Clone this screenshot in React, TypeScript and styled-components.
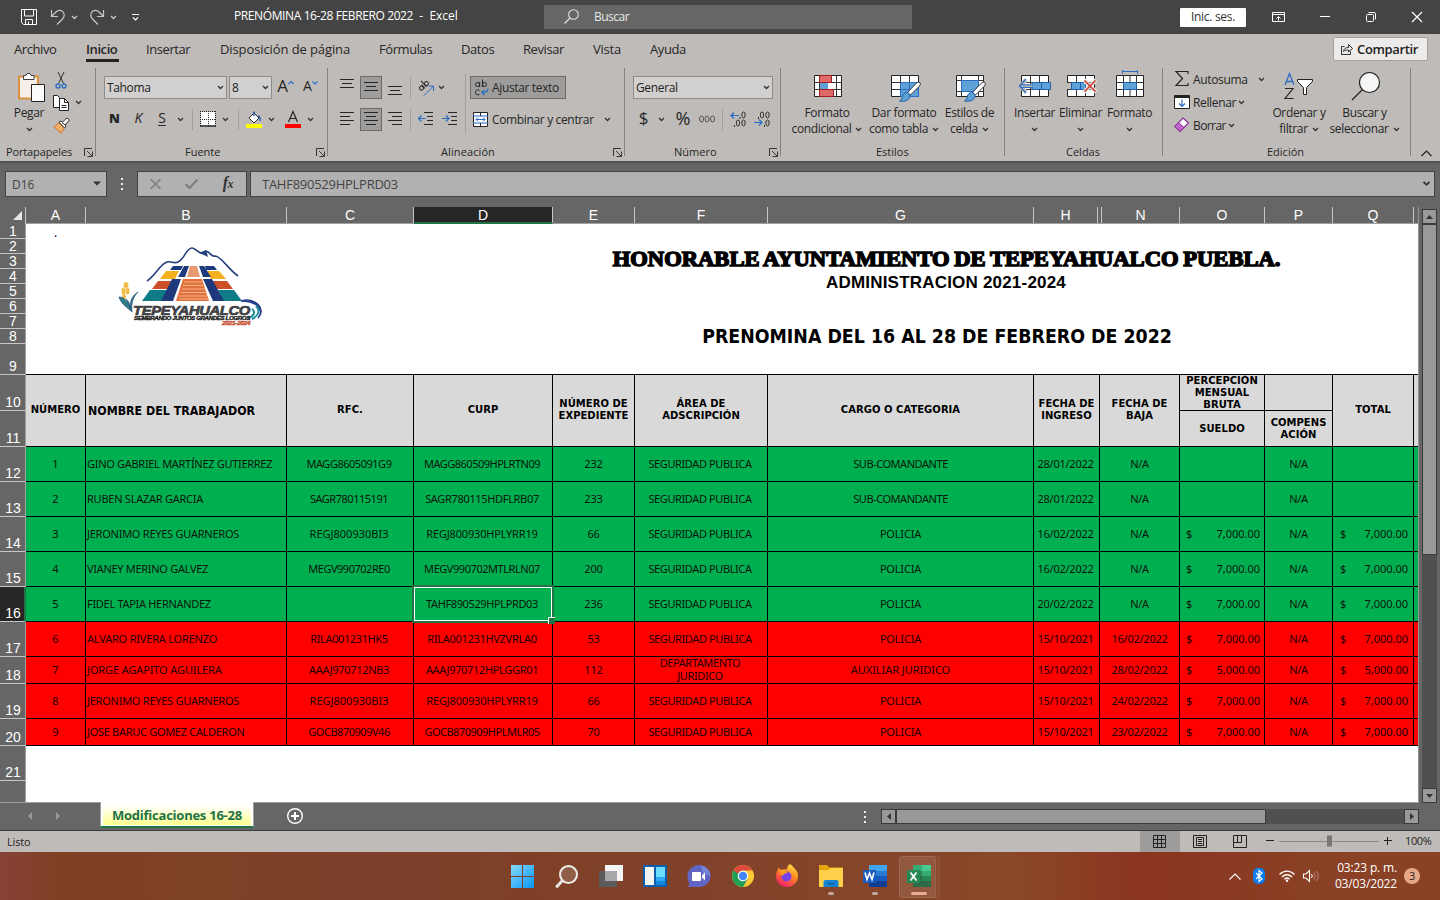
import React from "react";
import styled, { createGlobalStyle, css } from "styled-components";

const Global = createGlobalStyle`
  * { box-sizing: border-box; }
  body { margin: 0; background: #666; overflow: hidden; }
  button { border: 0; padding: 0; margin: 0; background: none; color: inherit; font: inherit; letter-spacing: inherit; }
`;
const UI = `"Open Sans","Noto Sans",sans-serif`;
const CELL = `"Noto Sans","Open Sans",sans-serif`;

/* ---------- shared pieces ---------- */
const Window = styled.div`
  width: 1440px; height: 900px; display: flex; flex-direction: column; overflow: hidden;
  font: 12px/16px ${UI}; letter-spacing: -0.35px; color: #262626; background: #666; white-space: nowrap;
`;
const Drawing = styled.svg`display: block; flex: none; overflow: visible;`;
const Ico = ({ w, h, children }: { w: number; h: number; children: React.ReactNode }) => (
  <Drawing width={w} height={h} viewBox={`0 0 ${w} ${h}`} fill="none">{children}</Drawing>
);
const Chevron = ({ color = "#333" }: { color?: string }) => (
  <Ico w={7} h={5}><path d="M1 1L3.500 3.500 6 1" stroke={color} strokeWidth="1.300" /></Ico>
);

/* ---------- title bar ---------- */
const TitleBar = styled.header`
  height: 34px; flex: none; background: #444; color: #fff; display: flex; align-items: center; padding-left: 21px;
`;
const BarButton = styled.button<{ $gap: number; $w: number }>`
  margin-left: ${p => p.$gap}px; width: ${p => p.$w}px; display: flex; justify-content: center; flex: none;
`;
const DocTitle = styled.div`margin-left: 95px; width: 310px; padding-bottom: 2px; letter-spacing: -0.39px; white-space: pre; display: flex;`;
const AppName = styled.span`letter-spacing: 0;`;
const SearchBox = styled.div`
  width: 368px; height: 24px; margin-top: -1px; background: #666; display: flex; align-items: center; gap: 15px; padding-left: 20px;
  color: #e6e6e6; letter-spacing: -0.5px;
`;
const SignIn = styled.button`
  margin-left: 268px; width: 66px; height: 19px; background: #fff; color: #333; border-radius: 1px; line-height: 18px; letter-spacing: -0.31px;
`;

/* ---------- tabs ---------- */
const TabRow = styled.nav`
  height: 32px; flex: none; background: #bfbbb8; display: flex; align-items: flex-start; font-size: 13px; letter-spacing: -0.42px;
`;
const Tab = styled.button<{ $gap: number; $w: number; $ls?: number; $active?: boolean }>`
  margin-left: ${p => p.$gap}px; width: ${p => p.$w}px; height: 28px; padding-top: 2px; line-height: 18px; text-align: left;
  ${p => p.$ls !== undefined && css`letter-spacing: ${p.$ls}px;`}
  ${p => p.$active && css`font-weight: 600; padding-top: 5px; border-bottom: 3px solid #222;`}
`;
const Share = styled.button`
  margin: 3px 12px 0 auto; width: 95px; height: 24px; background: #edebe9; border: 1px solid #a3a09e; border-radius: 2px;
  display: flex; align-items: center; gap: 4px; padding-left: 7px; font-weight: 600; color: #222; letter-spacing: -0.36px;
`;

/* ---------- ribbon ---------- */
const Ribbon = styled.div`
  height: 95px; flex: none; background: #bfbbb8; display: flex; padding-top: 2px;
`;
const Group = styled.section<{ $w: number }>`
  width: ${p => p.$w}px; height: 88px; flex: none; border-right: 1px solid #85827f; display: flex; flex-direction: column;
`;
const GroupBody = styled.div`height: 78px; display: flex; flex: none;`;
const GroupLabel = styled.div<{ $x: number; $ls?: number }>`
  height: 12px; display: flex; align-items: center; font-size: 11px; line-height: 14px; padding-left: ${p => p.$x}px; letter-spacing: ${p => p.$ls ?? 0}px;
`;
const Launcher = styled.span`margin-left: auto; margin-right: 2px;`;
const Rows = styled.div<{ $w?: number }>`
  padding-top: 8px; display: flex; flex-direction: column; gap: 9px; flex: none; ${p => p.$w && css`width: ${p.$w}px;`}
`;
const ToolRow = styled.div`height: 23px; display: flex; align-items: center;`;
const Tool = styled.button<{ $gap: number; $w: number; $on?: boolean }>`
  margin-left: ${p => p.$gap}px; width: ${p => p.$w}px; height: 23px; flex: none; display: flex; align-items: center; justify-content: center;
  ${p => p.$on && css`background: #9f9d9b; border: 1px solid #6d6b69;`}
`;
const Divider = styled.i<{ $gap: number }>`width: 1px; height: 21px; margin-left: ${p => p.$gap}px; background: #a19e9b; flex: none;`;
const TallDivider = styled.i`width: 1px; height: 59px; margin-top: 6px; background: #a19e9b; flex: none;`;
const Combo = styled.div<{ $w: number; $gap: number }>`
  margin-left: ${p => p.$gap}px; width: ${p => p.$w}px; height: 23px; background: #d2d0ce; border: 1px solid #8f8d8b; flex: none;
  display: flex; align-items: center; justify-content: space-between; padding: 0 2px 0 2px; color: #222;
`;
const Glyph = styled.span<{ $size?: number; $kind?: "bold" | "italic" | "under" }>`
  font-size: ${p => p.$size ?? 14}px; letter-spacing: 0; line-height: 20px; color: #262626; padding-bottom: 3px;
  ${p => p.$kind === "bold" && css`font-weight: 800; font-size: 13px;`}
  ${p => p.$kind === "italic" && css`font-style: italic;`}
  ${p => p.$kind === "under" && css`text-decoration: underline; text-underline-offset: 2px;`}
`;
const IconLabel = styled.button<{ $gap: number; $w: number; $on?: boolean }>`
  margin-left: ${p => p.$gap}px; width: ${p => p.$w}px; height: 23px; display: flex; align-items: center; gap: 3px; padding-left: 3px;
  ${p => p.$on && css`background: #9f9d9b; border: 1px solid #6d6b69; padding-left: 4px;`}
`;
const BigButton = styled.button<{ $w: number; $gap?: number }>`
  width: ${p => p.$w}px; margin-left: ${p => p.$gap ?? 0}px; display: flex; flex-direction: column; align-items: center; flex: none;
`;
const BigIcon = styled.span`height: 37px; display: flex; align-items: flex-start;`;
const BigLine = styled.span`height: 16px; line-height: 16px; display: flex; align-items: center; gap: 4px;`;
const SmallStack = styled.div<{ $w: number; $gap: number }>`
  margin-left: ${p => p.$gap}px; width: ${p => p.$w}px; display: flex; flex-direction: column; flex: none;
`;
const SmallRow = styled.button`height: 23px; display: flex; align-items: center; text-align: left;`;
const SmallIcon = styled.span<{ $w: number }>`width: ${p => p.$w}px; display: flex; flex: none;`;
const SmallText = styled.span<{ $w: number; $ls?: number }>`width: ${p => p.$w}px; flex: none; text-align: left; letter-spacing: ${p => p.$ls ?? -0.35}px;`;
const Collapse = styled.div`margin: 82px 0 0 10px;`;

/* ---------- formula bar ---------- */
const FormulaBar = styled.div`
  height: 46px; flex: none; background: linear-gradient(#4b4b4b 0, #5c5c5c 2px, #666 4px); display: flex; padding: 10px 0 0 5px; color: #444;
`;
const Field = styled.div<{ $w: number; $gap?: number }>`
  width: ${p => p.$w}px; margin-left: ${p => p.$gap ?? 0}px; height: 26px; background: #b1b1b1; border: 1px solid #444; flex: none; display: flex; align-items: center;
`;
const NameBox = styled(Field)`justify-content: space-between; padding: 1px 5px 0 6px; letter-spacing: 0;`;
const Dots = styled.div<{ $gap: number; $h: number }>`
  margin-left: ${p => p.$gap}px; width: 2px; height: ${p => p.$h}px; display: flex; flex-direction: column; gap: 3px; justify-content: center;
  i { width: 2px; height: 2px; background: #f0f0f0; }
`;
const FormulaButtons = styled(Field)`justify-content: space-between; padding: 0 13px 0 12px;`;
const FormulaInput = styled(Field)`justify-content: space-between; padding: 0 4px 0 11px; font-size: 13px; letter-spacing: -0.26px;`;
const Fx = styled.span`font: italic bold 16px/18px "Liberation Serif", serif; letter-spacing: -0.5px; color: #333; padding-bottom: 1px; small { font-size: 12px; }`;

/* ---------- worksheet ---------- */
const Workspace = styled.div`height: 596px; flex: none; display: flex; background: #666;`;
const RowHeads = styled.div`
  width: 26px; flex: none; display: flex; flex-direction: column; font: 14px/14px "Liberation Sans", Arial, sans-serif; letter-spacing: 0; color: #fff;
  border-bottom: 1px solid #a0a0a0;
`;
const Corner = styled.div`height: 17px; flex: none; border-right: 1px solid #c6c6c6; display: flex; justify-content: flex-end; padding: 4px 3px 0 0;`;
const RowHead = styled.div<{ $h: number; $sel?: boolean }>`
  height: ${p => p.$h}px; flex: none; border-bottom: 1px solid #c6c6c6; border-right: 1px solid #a0a0a0; display: flex; align-items: flex-end; justify-content: center;
  padding: 0 0 1px 1px;
  ${p => p.$h < 20 && css`padding-bottom: 0;`}
  ${p => p.$sel && css`background: #262626; border-right: 2px solid #217346; padding-left: 2px;`}
  &:last-child { flex: 1; border-bottom: 0; }
`;
const Sheet = styled.div`width: 1393px; flex: none; display: flex; flex-direction: column; border-right: 1px solid #949494; border-bottom: 1px solid #a0a0a0; background: #fff;`;
const ColHeads = styled.div`height: 17px; flex: none; background: #666; display: flex; border-bottom: 1px solid #a0a0a0;`;
const ColHead = styled.div<{ $w: number; $sel?: boolean }>`
  width: ${p => p.$w}px; height: 16px; flex: none; border-right: 1px solid #c6c6c6; text-align: center; color: #fff;
  font: 14px/17px "Liberation Sans", Arial, sans-serif; letter-spacing: 0;
  ${p => p.$sel && css`background: #262626; height: 17px; border-bottom: 2px solid #217346;`}
  &:last-child { border: 0; }
`;
const Banner = styled.div`height: 151px; flex: none; border-bottom: 1px solid #000; display: flex; color: #000;`;
const CellA1 = styled.div`width: 59px; flex: none; margin-right: 1px; text-align: center; font: 12px/18px ${CELL};`;
const LogoArea = styled.div`width: 200px; flex: none; padding: 23px 0 0 33px;`;
const Titles = styled.div`width: 900px; flex: none; margin-left: 211px; display: flex; flex-direction: column; align-items: center;`;
const TitleOne = styled.h1`
  margin: 23px 0 0; font: bold 20.6px/24px "Liberation Serif", serif; letter-spacing: 0; word-spacing: -0.8px; -webkit-text-stroke: 1.4px #000; transform: scaleX(1.096);
`;
const TitleTwo = styled.h2`margin: 2px 0 0 -2px; font: bold 17px/20px "Liberation Sans", Arial, sans-serif; letter-spacing: 0.2px;`;
const TitleThree = styled.h2`margin: 31px 0 0 -20px; font: bold 19.35px/26px "DejaVu Sans Condensed", ${CELL}; letter-spacing: 0;`;
const COLS = "60px 201px 127px 139px 82px 133px 266px 66px 80px 85px 68px 81px 4px";
const HeadGrid = styled.div`display: grid; grid-template-columns: ${COLS}; grid-template-rows: 36px 36px; background: #d9d9d9; color: #000;`;
const HeadCell = styled.div<{ $half?: boolean; $left?: boolean; $row?: number; $col: number }>`
  grid-column: ${p => p.$col}; grid-row: ${p => (p.$half ? p.$row : "1 / 3")};
  border-right: 1px solid #000; border-bottom: 1px solid #000; display: flex; align-items: center; justify-content: center; text-align: center;
  font: bold 10px/12px "DejaVu Sans", Verdana, sans-serif; letter-spacing: 0.03px; white-space: pre; padding: 0 0 2px 0;
  ${p => p.$half && css`padding-bottom: 0;`}
  ${p => p.$left && css`justify-content: flex-start; padding: 0 0 0 2px; font: bold 12.3px/14px "DejaVu Sans Condensed", ${CELL}; letter-spacing: 0;`}
  &:last-child { border-right: 0; }
`;
const DataRow = styled.div<{ $h: number; $tone: "green" | "red" }>`
  display: grid; grid-template-columns: ${COLS}; grid-template-rows: ${p => p.$h}px; flex: none;
  background: ${p => (p.$tone === "green" ? "#00b050" : "#ff0000")}; color: ${p => (p.$tone === "green" ? "#06160d" : "#200000")};
`;
const Cell = styled.div<{ $ls?: number; $align?: "left" | "money" | "total" }>`
  position: relative; border-right: 1px solid #000; border-bottom: 1px solid #000; display: flex; align-items: center; justify-content: center; text-align: center;
  font: 11px/13px ${CELL}; letter-spacing: ${p => p.$ls ?? 0}px; white-space: pre; padding: 0 0 2px 0; min-height: 0;
  &:nth-child(3), &:nth-child(4), &:nth-child(6), &:nth-child(8) { padding-right: 2px; }
  ${p => p.$align === "left" && css`justify-content: flex-start; padding: 0 0 2px 1px;`}
  ${p => p.$align === "money" && css`justify-content: space-between; padding: 0 4px 2px 6px;`}
  ${p => p.$align === "total" && css`justify-content: space-between; padding: 0 5px 2px 7px;`}
  &:last-child { border-right: 0; }
`;
const Selection = styled.div`
  position: absolute; left: -2px; top: -2px; width: 142px; height: 38px; border: 2px solid #217346; box-shadow: inset 0 0 0 1px #fff; z-index: 2;
  &::after { content: ""; position: absolute; right: -3px; bottom: -3px; width: 6px; height: 6px; background: #217346; border-left: 1px solid #fff; border-top: 1px solid #fff; }
`;
const VScroll = styled.div`margin: 2px 0 0 3px; width: 15px; height: 594px; background: #505050; display: flex; flex-direction: column;`;
const ScrollButton = styled.button`
  width: 15px; height: 15px; flex: none; background: #999; border: 1px solid #3b3b3b; display: flex; align-items: center; justify-content: center;
`;
const VThumb = styled.div`height: 331px; background: #999; border: 1px solid #3b3b3b; margin-bottom: auto;`;

/* ---------- sheet tabs & status ---------- */
const SheetBar = styled.div`height: 28px; flex: none; background: #666; border-bottom: 1px solid #3b3b3b; display: flex; align-items: center;`;
const SheetNav = styled.span<{ $gap: number }>`margin-left: ${p => p.$gap}px; padding-bottom: 2px; display: flex; height: 26px; align-items: center;`;
const SheetTab = styled.div`
  margin: -1px 0 2px 40px; width: 154px; height: 26px; align-self: flex-start; background: #fff; border-bottom: 2px solid #217346; padding: 1px 2px 1px; border-left: 1px solid #a0a0a0; border-right: 1px solid #a0a0a0;
  color: #217346; font: bold 13px/25px ${UI}; letter-spacing: -0.24px; text-align: center;
`;
const TabFill = styled.div`height: 22px; background: linear-gradient(#fff 10%, #ffff90);`;
const AddSheet = styled.span`margin-left: 33px; width: 16px; height: 27px; padding-bottom: 2px; display: flex; align-items: center;`;
const HScroll = styled.div`margin-left: 15px; width: 538px; height: 15px; background: #505050; display: flex; margin-top: -1px;`;
const HThumb = styled.div`width: 370px; height: 15px; background: #999; border: 1px solid #3b3b3b; margin-right: auto;`;
const StatusBar = styled.div`height: 21px; flex: none; background: #bfbbb8; display: flex; align-items: center; font-size: 11px; letter-spacing: -0.16px;`;
const Ready = styled.span`margin-left: 7px; width: 1133px; padding-top: 1px;`;
const ViewButton = styled.button<{ $on?: boolean }>`
  width: 40px; height: 21px; display: flex; align-items: center; justify-content: center; flex: none; padding-bottom: 1px; ${p => p.$on && css`background: #9e9c9a; padding-right: 1px;`}
`;
const ZoomSlider = styled.div`margin-left: 5px; width: 126px; flex: none; padding-bottom: 1px;`;
const ZoomText = styled.span`margin-left: 14px; letter-spacing: -0.37px; padding-bottom: 1px;`;

/* ---------- taskbar ---------- */
const Taskbar = styled.footer`
  height: 48px; flex: none; display: flex; padding-left: 501px; color: #fff;
  background: linear-gradient(90deg, #874136 0, #84412f 28px, #7f4022 60px, #7e4226 200px, #7b3f2b 370px, #7e4128 520px, #80432a 700px, #874629 920px, #8a472a 1010px, #8b3e24 1080px, #8a3520 1140px, #8a3821 1200px, #8a4025 1300px, #8a4226 1440px);
`;
const TaskButton = styled.div<{ $active?: boolean }>`
  width: 44px; height: 48px; flex: none; position: relative; display: flex; justify-content: center; padding-top: 13px;
  ${p => p.$active && css`
    &::before { content: ""; position: absolute; left: 2px; top: 4px; width: 35px; height: 40px; border-radius: 4px; background: rgba(255,255,255,.07); border: 1px solid rgba(255,255,255,.07); }
    &::after { content: ""; position: absolute; left: 2px; top: 4px; width: 39px; height: 40px; border-radius: 4px; background: rgba(255,255,255,.03); border: 1px solid rgba(255,255,255,.05); }
  `}
`;
const Running = styled.i<{ $wide?: boolean }>`
  position: absolute; left: ${p => (p.$wide ? 14 : 19)}px; bottom: 5px; width: ${p => (p.$wide ? 16 : 6)}px; height: 3px; border-radius: 2px; background: ${p => (p.$wide ? "#eaa98d" : "#c0a89f")};
`;
const Tray = styled.div`margin-left: 288px; display: flex; align-items: center;`;
const TrayIcon = styled.span<{ $gap: number }>`margin-left: ${p => p.$gap}px; display: flex;`;
const Clock = styled.div`margin-left: 13px; width: 64px; text-align: right; letter-spacing: -0.16px; line-height: 16px; font-size: 12px;`;
const Badge = styled.span`margin-left: 7px; width: 16px; height: 16px; border-radius: 8px; background: #e9a78a; color: #222; text-align: center; font-size: 11px; line-height: 16px;`;

/* ---------- drawings ---------- */
const K = "#262626", B = "#2b6cc4", P = "#5ea1d6";
const Lines = ({ l }: { l: [number, number, number][] }) => (
  <Ico w={14} h={15}><g fill={K}>{l.map(([a, b, y], i) => <path key={i} d={`M${a} ${y}H${b}v1H${a}z`} />)}</g></Ico>
);
const LauncherIcon = () => <Ico w={9} h={9}><path d="M.5 8V.5H8M3 3l5 5M8.500 3.500v5h-5" stroke="#333" /></Ico>;
const TableBase = () => (
  <g><path d="M.5.5h27v21H.5z" fill="#fff" stroke="#222" /><path d="M0 7.500h28M0 14.500h28M9.500 0v22M18.500 0v22" stroke="#333" /></g>
);
const BrushShape = () => (
  <g>
    <path d="M28 7c2 1 1.500 2.500.5 4l-9 9-3-2.500 8-8.500c1-1.200 2.300-2 3.500-2z" fill="#fff" stroke="#333" />
    <path d="M15.500 17.500c2 0 4 2 3.500 4-.6 3.500-5 5.500-10.500 4.500 2.500-.8 2.300-3 3-5 .6-2 2-3.500 4-3.500z" fill={P} stroke="#1f5fa8" />
  </g>
);
const Logo = () => (
  <Ico w={146} h={80}>
    <path d="M28 34C37 28 41 17 48 15c4-1 7 2 11 0 7-3 8-14 14-14 3 0 5 4 9 5 3 0 4-3 7-1s4 5 7 4c6 0 12 12 23 20" stroke="#243f7d" strokeWidth="1.600" />
    <path d="M80 6l7-3 2 7-4-2z" fill="#243f7d" />
    <path d="M54 19h10l-2 4H51zM86 19h9l3 4H87z" fill="#1f3a7c" />
    <path d="M47 24h13l-4 8H41zM87 24h13l7 8H92z" fill="#f4b01e" />
    <path d="M39 34h17l-5 8H33zM93 34h15l6 8H97z" fill="#cc5027" />
    <path d="M31 43h19l-6 11H23zM99 43h16l8 11H104z" fill="#0f7b86" />
    <path d="M65 19l-6 11h7l4-11zM80 19h5l7 11h-8z" fill="#1f3a7c" />
    <path d="M53 32h9l-8 22H42zM84 32h9l12 22H94z" fill="#1f3a7c" />
    <path d="M71 19h7l3 11H68z" fill="#e79a72" />
    <path d="M64 32h19l7 22H57z" fill="#e2713a" />
    <path d="M65 35h18M64 38.500h20M63 42h23M62 45.500h25M60 49h28M60 52h29" stroke="#f3b08c" />
    <g fill="#f0bd4a"><ellipse cx="7" cy="38" rx="2.500" ry="3" /><ellipse cx="4.500" cy="44" rx="2" ry="3.500" /><ellipse cx="8.500" cy="44" rx="2" ry="3.500" /><ellipse cx="5" cy="50" rx="2" ry="3" /></g>
    <path d="M0 50c5 0 9 4 12 14-6-5-10-8-12-14zM7 52c3 2 4 6 5 12M19 45c-5 5-7 11-6 20-3-7-2-15 6-20z" fill="#2f7f86" stroke="#1f4f7c" strokeWidth=".7" />
    <path d="M122 54c14-4 26 8 17 17 7-8-1-17-17-17z" fill="#243f8d" stroke="#243f8d" strokeWidth="1.500" />
    <path d="M133 62c4 3 2 7-4 9M137 59c5 5 2 10-4 13" stroke="#1a8d99" strokeWidth="2" />
    <text x="14" y="67.500" fontFamily="Liberation Sans" fontWeight="bold" fontStyle="italic" fontSize="13.500" fill="#3f3f44" stroke="#3f3f44" strokeWidth=".7" textLength="117" lengthAdjust="spacingAndGlyphs">TEPEYAHUALCO</text>
    <text x="15" y="73" fontFamily="Liberation Sans" fontWeight="bold" fontStyle="italic" fontSize="5.200" fill="#222" stroke="#222" strokeWidth=".35" textLength="116" lengthAdjust="spacingAndGlyphs">SEMBRANDO JUNTOS GRANDES LOGROS</text>
    <text x="103" y="78" fontFamily="Liberation Sans" fontWeight="bold" fontStyle="italic" fontSize="4.800" fill="#c44a2a" stroke="#c44a2a" strokeWidth=".3" textLength="28" lengthAdjust="spacingAndGlyphs">2021-2024</text>
  </Ico>
);

/* ---------- data ---------- */
type Row = [string, string, string, string, string, string, string, string, string, string, string, string];
const ROWS: { h: number; tone: "green" | "red"; v: Row }[] = [
  { h: 35, tone: "green", v: ["1", "GINO GABRIEL MARTÍNEZ GUTIERREZ", "MAGG8605091G9", "MAGG860509HPLRTN09", "232", "SEGURIDAD PUBLICA", "SUB-COMANDANTE", "28/01/2022", "N/A", "", "N/A", ""] },
  { h: 35, tone: "green", v: ["2", "RUBEN SLAZAR GARCIA", "SAGR780115191", "SAGR780115HDFLRB07", "233", "SEGURIDAD PUBLICA", "SUB-COMANDANTE", "28/01/2022", "N/A", "", "N/A", ""] },
  { h: 35, tone: "green", v: ["3", "JERONIMO REYES GUARNEROS", "REGJ800930BI3", "REGJ800930HPLYRR19", "66", "SEGURIDAD PUBLICA", "POLICIA", "16/02/2022", "N/A", "7,000.00", "N/A", "7,000.00"] },
  { h: 35, tone: "green", v: ["4", "VIANEY MERINO GALVEZ", "MEGV990702RE0", "MEGV990702MTLRLN07", "200", "SEGURIDAD PUBLICA", "POLICIA", "16/02/2022", "N/A", "7,000.00", "N/A", "7,000.00"] },
  { h: 35, tone: "green", v: ["5", "FIDEL TAPIA HERNANDEZ", "", "TAHF890529HPLPRD03", "236", "SEGURIDAD PUBLICA", "POLICIA", "20/02/2022", "N/A", "7,000.00", "N/A", "7,000.00"] },
  { h: 35, tone: "red", v: ["6", "ALVARO RIVERA LORENZO", "RILA001231HK5", "RILA001231HVZVRLA0", "53", "SEGURIDAD PUBLICA", "POLICIA", "15/10/2021", "16/02/2022", "7,000.00", "N/A", "7,000.00"] },
  { h: 27, tone: "red", v: ["7", "JORGE AGAPITO AGUILERA", "AAAJ970712NB3", "AAAJ970712HPLGGR01", "112", "DEPARTAMENTO\nJURIDICO", "AUXILIAR JURIDICO", "15/10/2021", "28/02/2022", "5,000.00", "N/A", "5,000.00"] },
  { h: 35, tone: "red", v: ["8", "JERONIMO REYES GUARNEROS", "REGJ800930BI3", "REGJ800930HPLYRR19", "66", "SEGURIDAD PUBLICA", "POLICIA", "15/10/2021", "24/02/2022", "7,000.00", "N/A", "7,000.00"] },
  { h: 27, tone: "red", v: ["9", "JOSE BARUC GOMEZ CALDERON", "GOCB870909V46", "GOCB870909HPLMLR05", "70", "SEGURIDAD PUBLICA", "POLICIA", "15/10/2021", "23/02/2022", "7,000.00", "N/A", "7,000.00"] },
];
const SPACING = [0, -0.3, -0.48, -0.5, -0.2, -0.4, -0.45, -0.25, -0.25, -0.02, -0.25, -0.02];
/* strings whose tracking departs from their column's default */
const TRACKING: Record<string, number> = {
  REGJ800930BI3: 0, RILA001231HK5: -0.38, AAAJ970712NB3: -0.32, REGJ800930HPLYRR19: -0.17, SAGR780115HDFLRB07: -0.33,
  MEGV990702MTLRLN07: -0.45, TAHF890529HPLPRD03: -0.38, RILA001231HVZVRLA0: -0.3, AAAJ970712HPLGGR01: -0.33, GOCB870909HPLMLR05: -0.5,
  "JORGE AGAPITO AGUILERA": -0.12, "JERONIMO REYES GUARNEROS": -0.25, "RUBEN SLAZAR GARCIA": -0.25, "ALVARO RIVERA LORENZO": -0.2,
  "JOSE BARUC GOMEZ CALDERON": -0.3, "AUXILIAR JURIDICO": -0.05, POLICIA: -0.18,
};
const ROW_HEADS = [15, 15, 15, 15, 15, 15, 15, 15, 31, 36, 36, 35, 35, 35, 35, 35, 35, 27, 35, 27, 35];
const COL_HEADS: [string, number][] = [["A", 60], ["B", 201], ["C", 127], ["D", 139], ["E", 82], ["F", 133], ["G", 266], ["H", 64], ["", 4], ["N", 78], ["O", 85], ["P", 68], ["Q", 81], ["", 4]];
const alignOf = (c: number) => (c === 1 ? "left" : c === 9 ? "money" : c === 11 ? "total" : undefined);

const Money = ({ v }: { v: string }) => (v ? <><span>$</span><span>{v}</span></> : null);

export default function App() {
  return (
    <Window>
      <Global />
      <TitleBar>
        <BarButton $gap={0} $w={16}><Ico w={16} h={16}><path d="M.5.5h15v15h-13l-2-2zM3.500 1v6h9V1M4.500 15.500v-5h7v5M7.500 12.500v3" stroke="#fff" /></Ico></BarButton>
        <BarButton $gap={14} $w={14}><Ico w={14} h={16}><path d="M.5 1v6.500H7M1 7l4-4c2.500-2.500 6-2 7.500.5s.5 5-1.500 7l-5 5" stroke="#c8c8c8" strokeWidth="1.200" /></Ico></BarButton>
        <BarButton $gap={6} $w={7}><Chevron color="#c8c8c8" /></BarButton>
        <BarButton $gap={12} $w={14}><Ico w={14} h={16}><path d="M13.500 1v6.500H7M13 7L9 3C6.500.5 3 1 1.500 3.500s-.5 5 1.500 7l5 5" stroke="#c8c8c8" strokeWidth="1.200" /></Ico></BarButton>
        <BarButton $gap={6} $w={7}><Chevron color="#c8c8c8" /></BarButton>
        <BarButton $gap={15} $w={7}><Ico w={7} h={7}><path d="M0 .5h7M1 3.500L3.500 6 6 3.500" stroke="#fff" strokeWidth="1.200" /></Ico></BarButton>
        <DocTitle>PRENÓMINA 16-28 FEBRERO 2022<AppName>  -  Excel</AppName></DocTitle>
        <SearchBox>
          <Ico w={15} h={15}><circle cx="9.500" cy="5.500" r="4.800" stroke="#e0e0e0" strokeWidth="1.100" /><path d="M6 9L.5 14.500" stroke="#e0e0e0" strokeWidth="1.200" /></Ico>
          Buscar
        </SearchBox>
        <SignIn>Inic. ses.</SignIn>
        <BarButton $gap={26} $w={13}><Ico w={13} h={10}><path d="M.5.5h12v9H.5zM.5 2.500h12M6.500 8.500v-4M4.500 6.500l2-2 2 2" stroke="#fff" /></Ico></BarButton>
        <BarButton $gap={35} $w={10}><Ico w={10} h={2}><path d="M0 .5h10" stroke="#fff" /></Ico></BarButton>
        <BarButton $gap={36} $w={10}><Ico w={10} h={10}><rect x=".5" y="2.500" width="7" height="7" rx="1" stroke="#fff" /><path d="M2.500.5h5.500q1.500 0 1.500 1.500v5.500" stroke="#fff" /></Ico></BarButton>
        <BarButton $gap={36} $w={10}><Ico w={10} h={10}><path d="M0 0l10 10M10 0L0 10" stroke="#fff" strokeWidth="1.200" /></Ico></BarButton>
      </TitleBar>

      <TabRow>
        <Tab $gap={14} $w={43}>Archivo</Tab>
        <Tab $gap={29} $w={33} $active>Inicio</Tab>
        <Tab $gap={27} $w={45}>Insertar</Tab>
        <Tab $gap={29} $w={130} $ls={-0.1}>Disposición de página</Tab>
        <Tab $gap={29} $w={54}>Fórmulas</Tab>
        <Tab $gap={28} $w={34}>Datos</Tab>
        <Tab $gap={28} $w={42}>Revisar</Tab>
        <Tab $gap={28} $w={28} $ls={-0.22}>Vista</Tab>
        <Tab $gap={29} $w={38}>Ayuda</Tab>
        <Share>
          <Ico w={12} h={12}><path d="M3.500 3.500H.5v8h9v-3M2.500 8.500c.5-3 2-4 5-4v-3l4 4-4 3.500V7c-2 0-3.500 0-5 1.500z" stroke="#333" /></Ico>
          Compartir
        </Share>
      </TabRow>

      <Ribbon>
        <Group $w={96}>
          <GroupBody>
            <BigButton $w={42} $gap={8}>
              <BigIcon>
                <Ico w={20} h={34}>
                  <path d="M0 8.500h19v22H0z" fill="#f5efe8" stroke="#d9913f" strokeWidth="2" />
                  <path d="M4.500 11.500v-4H7l1-2h3l1 2h3v4z" fill="#fff" stroke="#444" />
                  <path d="M12.500 16.500h13v17h-13z" fill="#fbfbfb" stroke="#222" />
                </Ico>
              </BigIcon>
              <BigLine>Pegar</BigLine>
              <BigLine><Chevron /></BigLine>
            </BigButton>
            <SmallStack $gap={3} $w={34}>
              <SmallRow><SmallIcon $w={16}><Ico w={16} h={16}><path d="M5 0l5.500 11.500M11 0L5.500 11.500" stroke="#333" /><circle cx="5" cy="14" r="2" stroke={B} strokeWidth="1.300" /><circle cx="11" cy="14" r="2" stroke={B} strokeWidth="1.300" /></Ico></SmallIcon></SmallRow>
              <SmallRow><SmallIcon $w={22}><Ico w={16} h={16}><path d="M.5.5h4l2 2v10h-6z" fill="#fff" stroke="#222" /><path d="M6.500 3.500h5l4 4v8h-9z" fill="#fff" stroke="#222" /><path d="M11.500 3.500v4h4M8.500 10.500h5M8.500 12.500h5" stroke="#222" /></Ico></SmallIcon><Chevron /></SmallRow>
              <SmallRow><SmallIcon $w={17}><Ico w={17} h={15}><path d="M6 5L1 9l7 6 3.500-5z" fill="#f2b06c" stroke="#c87428" /><path d="M6 4l2-1 5 5-1.500 2z" fill="#fff" stroke="#333" /><path d="M9 4.500L14 0l2.500 2L12 7z" fill="#fff" stroke="#333" /></Ico></SmallIcon></SmallRow>
            </SmallStack>
          </GroupBody>
          <GroupLabel $x={6} $ls={-0.14}>Portapapeles<Launcher><LauncherIcon /></Launcher></GroupLabel>
        </Group>

        <Group $w={232}>
          <GroupBody>
            <Rows>
              <ToolRow>
                <Combo $gap={8} $w={123}>Tahoma<Chevron /></Combo>
                <Combo $gap={2} $w={43}>8<Chevron /></Combo>
                <Tool $gap={5} $w={17}><Glyph $size={17}>A</Glyph><Ico w={6} h={16}><path d="M.5 4L3 1.500 5.500 4" stroke={B} strokeWidth="1.200" /></Ico></Tool>
                <Tool $gap={8} $w={17}><Glyph $size={14}>A</Glyph><Ico w={6} h={16}><path d="M.5 1.500L3 4l2.500-2.500" stroke={B} strokeWidth="1.200" /></Ico></Tool>
              </ToolRow>
              <ToolRow>
                <Tool $gap={10} $w={17}><Glyph $kind="bold">N</Glyph></Tool>
                <Tool $gap={7} $w={17}><Glyph $kind="italic">K</Glyph></Tool>
                <Tool $gap={7} $w={16}><Glyph $kind="under">S</Glyph></Tool>
                <Tool $gap={7} $w={7}><Chevron /></Tool>
                <Divider $gap={8} />
                <Tool $gap={7} $w={16}><Ico w={16} h={17}><path d="M1 1h14v14H1z" fill="#fff" /><path d="M0 .5h16M.5 0v16M15.500 0v16" stroke="#222" strokeDasharray="1 1" /><path d="M8.500 0v16M0 8.500h16" stroke="#222" strokeDasharray="1 1" /><path d="M0 15h16" stroke="#222" strokeWidth="1.500" /></Ico></Tool>
                <Tool $gap={6} $w={7}><Chevron /></Tool>
                <Divider $gap={9} />
                <Tool $gap={7} $w={16}><Ico w={16} h={17}><path d="M3 7l5-5 5 5-5 5z" fill="#fff" stroke="#333" /><path d="M8 5V.5M12 5c2 .5 2.500 3 2 5" stroke="#1f5fa8" strokeWidth="1.500" /><path d="M0 13h16v4H0z" fill="#ff0" /></Ico></Tool>
                <Tool $gap={6} $w={7}><Chevron /></Tool>
                <Tool $gap={10} $w={16}><Ico w={16} h={17}><path d="M3.500 11L8 .5 12.500 11M5 7.500h6" stroke={K} strokeWidth="1.200" /><path d="M0 13h16v4H0z" fill="#f00" /></Ico></Tool>
                <Tool $gap={6} $w={7}><Chevron /></Tool>
              </ToolRow>
            </Rows>
          </GroupBody>
          <GroupLabel $x={89}>Fuente<Launcher><LauncherIcon /></Launcher></GroupLabel>
        </Group>

        <Group $w={297}>
          <GroupBody>
            <Rows $w={137}>
              <ToolRow>
                <Tool $gap={12} $w={14}><Lines l={[[0, 14, -1], [2, 12, 3], [0, 14, 7]]} /></Tool>
                <Tool $gap={6} $w={22} $on><Lines l={[[0, 14, 2], [2, 12, 6], [0, 14, 10]]} /></Tool>
                <Tool $gap={6} $w={14}><Lines l={[[0, 14, 6], [2, 12, 10], [0, 14, 14]]} /></Tool>
                <Divider $gap={8} />
                <Tool $gap={7} $w={16}><Ico w={16} h={16}><g stroke={K} transform="rotate(-42 5 6)"><circle cx="2.500" cy="6.500" r="2" /><path d="M4.800 4v5M7 1v8" /><circle cx="9.200" cy="6.500" r="2" /></g><path d="M6 15.500l9-9M10.500 6H15.500v5" stroke={B} /></Ico></Tool>
                <Tool $gap={4} $w={7}><Chevron /></Tool>
              </ToolRow>
              <ToolRow>
                <Tool $gap={12} $w={14}><Lines l={[[0, 14, 0], [0, 10, 4], [0, 14, 8], [0, 10, 12]]} /></Tool>
                <Tool $gap={6} $w={22} $on><Lines l={[[0, 14, 0], [2, 12, 4], [0, 14, 8], [2, 12, 12]]} /></Tool>
                <Tool $gap={6} $w={14}><Lines l={[[0, 14, 0], [4, 14, 4], [0, 14, 8], [4, 14, 12]]} /></Tool>
                <Divider $gap={8} />
                <Tool $gap={7} $w={15}><Ico w={15} h={15}><path d="M6 .5h9M9 4.500h6M9 8.500h6M6 12.500h9" stroke={K} /><path d="M.5 6.500h7M3.500 3.500l-3 3 3 3" stroke={B} strokeWidth="1.200" /></Ico></Tool>
                <Tool $gap={9} $w={15}><Ico w={15} h={15}><path d="M6 .5h9M9 4.500h6M9 8.500h6M6 12.500h9" stroke={K} /><path d="M0 6.500h7M4 3.500l3 3-3 3" stroke={B} strokeWidth="1.200" /></Ico></Tool>
              </ToolRow>
            </Rows>
            <TallDivider />
            <Rows>
              <ToolRow>
                <IconLabel $gap={4} $w={96} $on>
                  <Ico w={14} h={17}>
                    <circle cx="2.500" cy="5.500" r="2" stroke={K} /><path d="M4.700 3v5M7.500.5V8" stroke={K} /><circle cx="9.500" cy="5.500" r="2" stroke={K} />
                    <path d="M4.500 11.500c-2-1.500-4-.5-4 1.800s2 3.200 4 2" stroke={K} /><path d="M13 9.500c0 3-2 4-6 4M9.500 11l-2.700 2.500L9.500 16" stroke={B} strokeWidth="1.300" />
                  </Ico>Ajustar texto
                </IconLabel>
              </ToolRow>
              <ToolRow>
                <IconLabel $gap={4} $w={145}>
                  <Ico w={16} h={16}><path d="M.5.5h14v14H.5z" fill="#fff" stroke="#222" /><path d="M0 4h15M0 11h15" stroke={B} /><path d="M7.500 0v4M7.500 11v4" stroke="#222" /><path d="M3 7.500h9M5 5.500l-2 2 2 2M10 5.500l2 2-2 2" stroke={B} /></Ico>
                  <SmallText $w={109}>Combinar y centrar</SmallText><Chevron />
                </IconLabel>
              </ToolRow>
            </Rows>
          </GroupBody>
          <GroupLabel $x={113} $ls={0.1}>Alineación<Launcher><LauncherIcon /></Launcher></GroupLabel>
        </Group>

        <Group $w={156}>
          <GroupBody>
            <Rows>
              <ToolRow><Combo $gap={8} $w={140}>General<Chevron /></Combo></ToolRow>
              <ToolRow>
                <Tool $gap={10} $w={17}><Glyph $size={17}>$</Glyph></Tool>
                <Tool $gap={6} $w={7}><Chevron /></Tool>
                <Tool $gap={9} $w={18}><Glyph $size={18}>%</Glyph></Tool>
                <Tool $gap={7} $w={16}><Ico w={16} h={9}><g stroke="#555"><ellipse cx="2.500" cy="4" rx="2" ry="3" /><ellipse cx="8" cy="4" rx="2" ry="3" /><ellipse cx="13.500" cy="4" rx="2" ry="3" /></g></Ico></Tool>
                <Divider $gap={7} />
                <Tool $gap={7} $w={16}><Ico w={16} h={18}><g stroke="#333"><ellipse cx="13.500" cy="4" rx="1.700" ry="3" /><ellipse cx="8" cy="12" rx="1.700" ry="3" /><ellipse cx="13.500" cy="12" rx="1.700" ry="3" /><path d="M10 6v2M4.500 14v2" /></g><path d="M1 4.500h8M4 1.500l-3 3 3 3" stroke={B} strokeWidth="1.200" /></Ico></Tool>
                <Tool $gap={8} $w={16}><Ico w={16} h={18}><g stroke="#333"><ellipse cx="8" cy="4" rx="1.700" ry="3" /><ellipse cx="13.500" cy="4" rx="1.700" ry="3" /><ellipse cx="13.500" cy="12" rx="1.700" ry="3" /><path d="M4.500 6v2M10.500 14v2" /></g><path d="M0 11.500h8M5 8.500l3 3-3 3" stroke={B} strokeWidth="1.200" /></Ico></Tool>
              </ToolRow>
            </Rows>
          </GroupBody>
          <GroupLabel $x={49}>Número<Launcher><LauncherIcon /></Launcher></GroupLabel>
        </Group>

        <Group $w={224}>
          <GroupBody>
            <BigButton $w={80} $gap={6}>
              <BigIcon><Ico w={26} h={29}><g transform="translate(0 7)"><path d="M.5.5h27v21H.5z" fill="#fff" stroke="#222" /><path d="M0 7.500h28M0 14.500h28M5.500 0v22M13.500 0v22M22.500 0v22" stroke="#333" /><path d="M5.500.5h12v7h-12zM5.500 14.500h14v7h-14z" fill="#e0696b" stroke="#a31d1f" /><path d="M6 8h8v6H6z" fill={P} /></g></Ico></BigIcon>
              <BigLine>Formato</BigLine><BigLine>condicional <Chevron /></BigLine>
            </BigButton>
            <BigButton $w={74}>
              <BigIcon><Ico w={26} h={34}><g transform="translate(0 7)"><TableBase /><path d="M9.500 7.500h18v14h-18z" fill={P} stroke="#2b6cc4" /><path d="M18.500 8v13M9.500 14.500h18" stroke="#2b6cc4" /><BrushShape /></g></Ico></BigIcon>
              <BigLine>Dar formato</BigLine><BigLine>como tabla <Chevron /></BigLine>
            </BigButton>
            <BigButton $w={57}>
              <BigIcon><Ico w={28} h={34}><g transform="translate(0 7)"><path d="M.5.5h27v21H.5z" fill="#fff" stroke="#222" /><path d="M0 5.500h28M0 16.500h28M5.500 0v22M22.500 0v22" stroke="#333" /><path d="M5.500 5.500h17v11h-17z" fill={P} stroke="#2b6cc4" /><BrushShape /></g></Ico></BigIcon>
              <BigLine>Estilos de</BigLine><BigLine>celda <Chevron /></BigLine>
            </BigButton>
          </GroupBody>
          <GroupLabel $x={95}>Estilos</GroupLabel>
        </Group>

        <Group $w={158}>
          <GroupBody>
            <BigButton $w={43} $gap={8}>
              <BigIcon><Ico w={28} h={29}><g transform="translate(0 7)"><TableBase /><path d="M11 7.500h18.500v7H11z" fill={P} stroke="#1f5fa8" /><path d="M20.500 7.500v7" stroke="#1f5fa8" /><path d="M-1 11h12.500M5 5l-6 6 6 6" stroke="#bfbbb8" strokeWidth="4" /><path d="M-1 10h13M5 4l-6.500 7L5 18M-1 12.500h13" stroke={B} strokeWidth="1.200" /></g></Ico></BigIcon>
              <BigLine>Insertar</BigLine><BigLine><Chevron /></BigLine>
            </BigButton>
            <BigButton $w={49}>
              <BigIcon><Ico w={28} h={29}><g transform="translate(0 7)"><TableBase /><path d="M-.5 8h5v6h-5z" fill="#bfbbb8" /><path d="M4.500 7.500h14v7h-14z" fill={P} stroke="#1f5fa8" /><path d="M13.500 7.500v7" stroke="#1f5fa8" /><path d="M17 5l12 12M29 5L17 17" stroke="#e8e4e1" strokeWidth="4" /><path d="M17.500 5.500l11 11M28.500 5.500l-11 11" stroke="#c9392b" strokeWidth="1.500" /></g></Ico></BigIcon>
              <BigLine>Eliminar</BigLine><BigLine><Chevron /></BigLine>
            </BigButton>
            <BigButton $w={49}>
              <BigIcon><Ico w={28} h={29}><g transform="translate(0 7)"><path d="M.5.5h27v21H.5z" fill="#fff" stroke="#222" /><path d="M0 7.500h28M0 14.500h28M7.500 0v22M20.500 0v22M14 0v7M14 15v7" stroke="#333" /><path d="M7.500 7.500h13v7h-13z" fill={P} stroke="#1f5fa8" /></g><path d="M6.500 3.500h15M6.500 2v4M21.500 2v4" stroke={B} /></Ico></BigIcon>
              <BigLine>Formato</BigLine><BigLine><Chevron /></BigLine>
            </BigButton>
          </GroupBody>
          <GroupLabel $x={61}>Celdas</GroupLabel>
        </Group>

        <Group $w={248}>
          <GroupBody>
            <SmallStack $gap={11} $w={97}>
              <SmallRow><SmallIcon $w={19}><Ico w={16} h={17}><path d="M14 3V.500H2L8.500 7.500 2 14.500h12V12" stroke={K} strokeWidth="1.200" /></Ico></SmallIcon><SmallText $w={65}>Autosuma</SmallText><Chevron /></SmallRow>
              <SmallRow><SmallIcon $w={19}><Ico w={16} h={15}><path d="M.5.5h15v13H.5z" fill="#fff" stroke="#222" /><path d="M0 2h16" stroke="#222" strokeWidth="2" /><path d="M8 4.500v7M5 8.500l3 3 3-3" stroke={B} strokeWidth="1.200" /></Ico></SmallIcon><SmallText $w={45}>Rellenar</SmallText><Chevron /></SmallRow>
              <SmallRow><SmallIcon $w={19}><Ico w={16} h={17}><path d="M9 1l5.500 5L6 14.500.8 9.500z" fill="#fff" stroke="#8c2f98" strokeWidth="1.200" /><path d="M4.500 5.500l5.500 5L6 14.500.8 9.500z" fill="#c166cc" stroke="#8c2f98" /></Ico></SmallIcon><SmallText $w={35} $ls={-0.6}>Borrar</SmallText><Chevron /></SmallRow>
            </SmallStack>
            <BigButton $w={56}>
              <BigIcon><Ico w={30} h={33}><path d="M1 17L5.500 5.500 10 17M2.500 13.500h6" stroke={B} strokeWidth="1.300" /><path d="M1 20.500h8L1 30.500h8.500" stroke={K} strokeWidth="1.200" /><path d="M13.500 11.500h15v2l-6 6v7h-3v-7l-6-6z" fill="#fff" stroke="#222" /></Ico></BigIcon>
              <BigLine>Ordenar y</BigLine><BigLine>filtrar <Chevron /></BigLine>
            </BigButton>
            <BigButton $w={75}>
              <BigIcon><Ico w={30} h={33}><circle cx="19.500" cy="14.500" r="10" fill="#f6f6f6" stroke="#222" strokeWidth="1.200" /><path d="M12.500 21.500L2 32" stroke="#222" strokeWidth="1.200" /></Ico></BigIcon>
              <BigLine>Buscar y</BigLine><BigLine>seleccionar <Chevron /></BigLine>
            </BigButton>
          </GroupBody>
          <GroupLabel $x={104}>Edición</GroupLabel>
        </Group>
        <Collapse><Ico w={11} h={7}><path d="M.5 6l5-5 5 5" stroke="#222" strokeWidth="1.200" /></Ico></Collapse>
      </Ribbon>

      <FormulaBar>
        <NameBox $w={102}>D16<Ico w={8} h={7}><path d="M0 .500h8l-4 4z" fill="#333" /></Ico></NameBox>
        <Dots $gap={14} $h={26}><i /><i /><i /></Dots>
        <FormulaButtons $w={110} $gap={14}>
          <Ico w={11} h={10}><path d="M.5 0l10 10M10.500 0l-10 10" stroke="#7f7f7f" strokeWidth="1.600" /></Ico>
          <Ico w={13} h={10}><path d="M.5 5l4 4L12.500.5" stroke="#7f7f7f" strokeWidth="2.200" /></Ico>
          <Fx>f<small>x</small></Fx>
        </FormulaButtons>
        <FormulaInput $w={1185} $gap={3}>TAHF890529HPLPRD03<Ico w={7} h={7}><path d="M.5.800l3 3 3-3" stroke="#333" strokeWidth="1.800" /></Ico></FormulaInput>
      </FormulaBar>

      <Workspace>
        <RowHeads>
          <Corner><Ico w={9} h={9}><path d="M9 0v9H0z" fill="#e8e8e8" /></Ico></Corner>
          {ROW_HEADS.map((h, i) => <RowHead key={i} $h={h} $sel={i === 15}>{i + 1}</RowHead>)}
          <RowHead $h={21} />
        </RowHeads>
        <Sheet>
          <ColHeads>{COL_HEADS.map(([t, w], i) => <ColHead key={i} $w={w} $sel={t === "D"}>{t}</ColHead>)}</ColHeads>
          <Banner>
            <CellA1>.</CellA1>
            <LogoArea><Logo /></LogoArea>
            <Titles>
              <TitleOne>HONORABLE AYUNTAMIENTO DE TEPEYAHUALCO PUEBLA.</TitleOne>
              <TitleTwo>ADMINISTRACION 2021-2024</TitleTwo>
              <TitleThree>PRENOMINA DEL 16 AL 28 DE FEBRERO DE 2022</TitleThree>
            </Titles>
          </Banner>
          <HeadGrid>
            <HeadCell $col={1}>NÚMERO</HeadCell>
            <HeadCell $col={2} $left>NOMBRE DEL TRABAJADOR</HeadCell>
            <HeadCell $col={3}>RFC.</HeadCell>
            <HeadCell $col={4}>CURP</HeadCell>
            <HeadCell $col={5}>{"NÚMERO DE\nEXPEDIENTE"}</HeadCell>
            <HeadCell $col={6}>{"ÁREA DE\nADSCRIPCIÓN"}</HeadCell>
            <HeadCell $col={7}>CARGO O CATEGORIA</HeadCell>
            <HeadCell $col={8}>{"FECHA DE\nINGRESO"}</HeadCell>
            <HeadCell $col={9}>{"FECHA DE\nBAJA"}</HeadCell>
            <HeadCell $col={10} $half $row={1}>{"PERCEPCIÓN\nMENSUAL\nBRUTA"}</HeadCell>
            <HeadCell $col={11} $half $row={1} />
            <HeadCell $col={10} $half $row={2}>SUELDO</HeadCell>
            <HeadCell $col={11} $half $row={2}>{"COMPENS\nACIÓN"}</HeadCell>
            <HeadCell $col={12}>TOTAL</HeadCell>
            <HeadCell $col={13} />
          </HeadGrid>
          {ROWS.map((r, i) => (
            <DataRow key={i} $h={r.h} $tone={r.tone}>
              {r.v.map((t, c) => (
                <Cell key={c} $ls={TRACKING[t] ?? SPACING[c]} $align={alignOf(c)}>
                  {c === 9 || c === 11 ? <Money v={t} /> : t}
                  {i === 4 && c === 3 && <Selection />}
                </Cell>
              ))}
              <Cell />
            </DataRow>
          ))}
        </Sheet>
        <VScroll>
          <ScrollButton><Ico w={7} h={4}><path d="M0 4h7L3.500 0z" fill="#333" /></Ico></ScrollButton>
          <VThumb />
          <ScrollButton><Ico w={7} h={4}><path d="M0 0h7L3.500 4z" fill="#333" /></Ico></ScrollButton>
        </VScroll>
      </Workspace>

      <SheetBar>
        <SheetNav $gap={28}><Ico w={4} h={8}><path d="M4 0v8L0 4z" fill="#999" /></Ico></SheetNav>
        <SheetNav $gap={24}><Ico w={4} h={8}><path d="M0 0v8l4-4z" fill="#999" /></Ico></SheetNav>
        <SheetTab><TabFill>Modificaciones 16-28</TabFill></SheetTab>
        <AddSheet><Ico w={16} h={16}><circle cx="8" cy="8" r="7.300" stroke="#fff" strokeWidth="1.400" /><path d="M8 4v8M4 8h8" stroke="#fff" strokeWidth="2" /></Ico></AddSheet>
        <Dots $gap={561} $h={28}><i /><i /><i /></Dots>
        <HScroll>
          <ScrollButton><Ico w={4} h={7}><path d="M4 0v7L0 3.500z" fill="#333" /></Ico></ScrollButton>
          <HThumb />
          <ScrollButton><Ico w={4} h={7}><path d="M0 0v7l4-3.500z" fill="#333" /></Ico></ScrollButton>
        </HScroll>
      </SheetBar>

      <StatusBar>
        <Ready>Listo</Ready>
        <ViewButton $on><Ico w={13} h={13}><path d="M.5.5h12v12H.5zM4.500 0v13M8.500 0v13M0 4.500h13M0 8.500h13" stroke="#222" /></Ico></ViewButton>
        <ViewButton><Ico w={14} h={13}><path d="M.5.5h13v12H.5zM3.500 2.500h7v8h-7zM5 4.500h4M5 6.500h4M5 8.500h4" stroke="#222" /></Ico></ViewButton>
        <ViewButton><Ico w={14} h={13}><path d="M.5.5h13v12H.5zM.5 7.500h8v-7M4.500 1v6" stroke="#222" /></Ico></ViewButton>
        <ZoomSlider><Ico w={126} h={12}><path d="M1 5.500h8M119 5.500h8M122.500 2v8" stroke="#222" /><path d="M14 6.500h100" stroke="#8b8886" /><path d="M62 .5h5v11h-5z" fill="#777" /></Ico></ZoomSlider>
        <ZoomText>100%</ZoomText>
      </StatusBar>

      <Taskbar>
        <TaskButton><Ico w={24} h={24}><defs><linearGradient id="win" x1="0" y1="0" x2="1" y2="1"><stop stopColor="#84dbff" /><stop offset="1" stopColor="#0a95f5" /></linearGradient></defs><path d="M0 0h11v11H0zM12 0h11v11H12zM0 12h11v11H0zM12 12h11v11H12z" fill="url(#win)" /></Ico></TaskButton>
        <TaskButton><Ico w={24} h={24}><circle cx="13.500" cy="9.500" r="8.500" stroke="#eee" strokeWidth="2" fill="rgba(255,255,255,.15)" /><path d="M7 16l-5 5.500" stroke="#e4e4e4" strokeWidth="3" strokeLinecap="round" /></Ico></TaskButton>
        <TaskButton><Ico w={24} h={24}><path d="M6 0h18v16H6z" fill="#f4f4f4" /><path d="M0 6h18v16H0z" fill="#5c5c5c" /><path d="M6 6h12v10H6z" fill="#a8a8a8" /></Ico></TaskButton>
        <TaskButton><Ico w={24} h={24}><path d="M0 0h24v22H0z" fill="#0b5fae" /><rect x="2" y="2" width="9" height="18" fill="#f4f4f4" /><path d="M13 2h9v10h-9z" fill="#6bdcff" /><path d="M13 12h9v4h-9z" fill="#2fa8f5" /><path d="M13 16h9v4h-9z" fill="#1286e0" /></Ico></TaskButton>
        <TaskButton><Ico w={24} h={24}><path d="M12 0c6.500 0 11.500 5 11.500 11S18.500 22 12 22H1l1.500-3.500C1 16.500.5 14 .5 11 .5 5 5.500 0 12 0z" fill="#6166c4" /><path d="M14 0.500c6 1 9.500 5.500 9.500 10.500l-8-3z" fill="#7d92dd" opacity=".7" /><rect x="5" y="7" width="9" height="9" rx="1" fill="#fff" /><path d="M15 10.500l3-3v8l-3-3z" fill="#fff" /></Ico></TaskButton>
        <TaskButton><Ico w={24} h={24}><circle cx="12" cy="11" r="11" fill="#fcc934" /><path d="M2.500 5.500A11 11 0 0012 22l4.800-8.300L12 11z" fill="#1ea055" /><path d="M2.500 5.500L7.300 13.700 12 8z" fill="#1ea055" /><path d="M2.500 5.500A11 11 0 0121.500 5.500H12a5.500 5.500 0 00-5 3.300z" fill="#dd4a3d" /><circle cx="12" cy="11" r="5.300" fill="#fff" /><circle cx="12" cy="11" r="4.200" fill="#4285f4" /></Ico></TaskButton>
        <TaskButton><Ico w={24} h={24}><defs><linearGradient id="ff" x1=".8" y1="0" x2=".3" y2="1"><stop stopColor="#ffe14a" /><stop offset=".45" stopColor="#ff8a1f" /><stop offset="1" stopColor="#f5186b" /></linearGradient></defs><path d="M15-1c3 2 4 4 5 5 2 2 3 4 3 7a11 11 0 01-22 0C1 7 3 5 3.500 2.500L6 5c2-1 4-1 6-.5C12 2 13 0 15-1z" fill="url(#ff)" /><circle cx="11.500" cy="11.500" r="5" fill="#7542e5" /><path d="M4 5c4-1 6 1 9 3-3 0-4 1-6 3z" fill="#ff9a1f" /></Ico></TaskButton>
        <TaskButton><Ico w={24} h={24}><path d="M0 0h8l2.500 2.500H24V22H0z" fill="#e5a50a" /><path d="M0 5h9l2.500-2H24v19H0z" fill="#fdd04a" /><path d="M4.500 22v-5q0-2 2-2h11q2 0 2 2v5z" fill="#1583d2" /><path d="M9 18h6v1.500H9z" fill="#0b5a9c" /></Ico><Running /></TaskButton>
        <TaskButton><Ico w={24} h={24}><path d="M6 0h18v6H6z" fill="#41a5ee" /><path d="M6 6h18v5H6z" fill="#2b7cd3" /><path d="M6 11h18v5H6z" fill="#185abd" /><path d="M6 16h18v6H6z" fill="#103f91" /><rect y="5" width="13" height="13" fill="#185abd" /><path d="M2 7.500l2 7 2.500-6.500L9 14.500l2-7" stroke="#fff" strokeWidth="1.600" /></Ico><Running /></TaskButton>
        <TaskButton $active><Ico w={24} h={24}><path d="M6 0h9v6H6z" fill="#21a366" /><path d="M15 0h9v6h-9z" fill="#33c481" /><path d="M6 6h9v5H6z" fill="#107c41" /><path d="M15 6h9v5h-9z" fill="#21a366" /><path d="M6 11h18v11H6z" fill="#185c37" /><path d="M15 11h9v5h-9z" fill="#107c41" /><rect y="5" width="13" height="13" fill="#107c41" /><path d="M3.500 7.500l6 8M9.500 7.500l-6 8" stroke="#fff" strokeWidth="1.800" /></Ico><Running $wide /></TaskButton>
        <Tray>
          <TrayIcon $gap={0}><Ico w={12} h={7}><path d="M.5 6.500L6 1l5.500 5.500" stroke="#fff" strokeWidth="1.200" /></Ico></TrayIcon>
          <TrayIcon $gap={12}><Ico w={12} h={16}><rect width="12" height="16" rx="5" fill="#0a7cf0" /><path d="M3 5l6 6-3 2.500V2.500L9 5l-6 6" stroke="#fff" strokeWidth="1.200" /></Ico></TrayIcon>
          <TrayIcon $gap={14}><Ico w={16} h={12}><path d="M.5 4.500c4.500-4.500 10.500-4.500 15 0M3 7c3-3 7-3 10 0M5.500 9.300c1.500-1.500 3.500-1.500 5 0" stroke="#fff" strokeWidth="1.300" /><circle cx="8" cy="10.800" r="1.200" fill="#fff" /></Ico></TrayIcon>
          <TrayIcon $gap={8}><Ico w={17} h={12}><path d="M.5 4v4H3l3.500 3.500V.5L3 4z" stroke="#fff" strokeWidth="1.100" /><path d="M8.500 4q1.500 2 0 4" stroke="#fff" /><path d="M11 2.500q2.500 3.500 0 7M13.500 1q3.500 5 0 10" stroke="#b98a78" /></Ico></TrayIcon>
          <Clock>03:23 p. m.<br />03/03/2022</Clock>
          <Badge>3</Badge>
        </Tray>
      </Taskbar>
    </Window>
  );
}
